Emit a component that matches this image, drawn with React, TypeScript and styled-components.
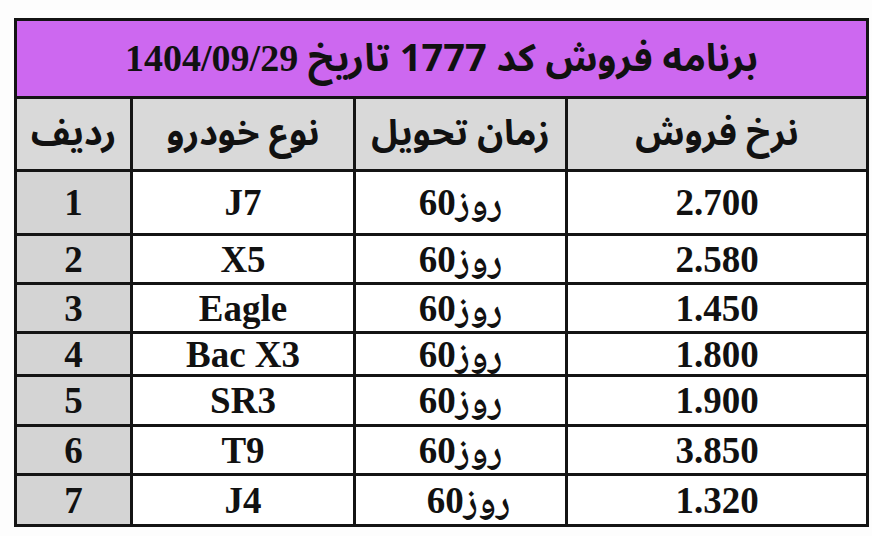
import styled, { createGlobalStyle } from "styled-components";

const GlobalStyle = createGlobalStyle`
    html, body {
        margin: 0;
        padding: 0;
        background: #fdfdfd;
    }
`;

const Page = styled.div`
    width: 872px;
    height: 536px;
    padding: 18px 0 0 14px;
    box-sizing: border-box;
`;

const Table = styled.table`
    width: 852px;
    border-collapse: collapse;
    table-layout: fixed;
    border: 3px solid #141414;
    direction: ltr;
`;

const TitleCell = styled.td`
    height: 75px;
    background: #cd68f0;
    border: 3px solid #141414;
    text-align: center;
    font-family: "Noto Sans Arabic", "DejaVu Sans", sans-serif;
    font-weight: bold;
    font-size: 38px;
    line-height: 1;
    color: #111;
    padding: 0;
`;

const SerifNum = styled.span`
    font-family: "Liberation Serif", serif;
    font-size: 38px;
`;

const HeadCell = styled.th`
    height: 70px;
    background: #d9d9d9;
    border: 3px solid #141414;
    text-align: center;
    font-family: "Noto Sans Arabic", "DejaVu Sans", sans-serif;
    font-weight: bold;
    font-size: 36px;
    line-height: 1;
    color: #111;
    padding: 0;
`;

const Row = styled.tr<{ $h: number }>`
    height: ${(p) => p.$h}px;
`;

const Cell = styled.td<{ $shade?: boolean; $shift?: number }>`
    background: ${(p) => (p.$shade ? "#d4d4d4" : "#ffffff")};
    border: 3px solid #141414;
    text-align: center;
    font-family: "Liberation Serif", "Noto Naskh Arabic", "Noto Sans Arabic", "DejaVu Sans", serif;
    font-weight: bold;
    font-size: 37px;
    line-height: 1;
    color: #111;
    padding: 0 0 0 ${(p) => p.$shift ?? 0}px;
`;

const rows = [
    { n: "1", car: "J7", price: "2.700", h: 64 },
    { n: "2", car: "X5", price: "2.580", h: 49 },
    { n: "3", car: "Eagle", price: "1.450", h: 49 },
    { n: "4", car: "Bac X3", price: "1.800", h: 43 },
    { n: "5", car: "SR3", price: "1.900", h: 50 },
    { n: "6", car: "T9", price: "3.850", h: 49 },
    { n: "7", car: "J4", price: "1.320", h: 51, shift: 16 },
];

export default function App() {
    return (
        <Page>
            <GlobalStyle />
            <Table>
                <colgroup>
                    <col style={{ width: 116 }} />
                    <col style={{ width: 223 }} />
                    <col style={{ width: 212 }} />
                    <col style={{ width: 301 }} />
                </colgroup>
                <tbody>
                    <tr>
                        <TitleCell colSpan={4} dir="rtl">
                            برنامه فروش کد 1777 تاریخ <SerifNum>1404/09/29</SerifNum>
                        </TitleCell>
                    </tr>
                    <tr>
                        <HeadCell dir="rtl">ردیف</HeadCell>
                        <HeadCell dir="rtl">نوع خودرو</HeadCell>
                        <HeadCell dir="rtl">زمان تحویل</HeadCell>
                        <HeadCell dir="rtl">نرخ فروش</HeadCell>
                    </tr>
                    {rows.map((r) => (
                        <Row key={r.n} $h={r.h}>
                            <Cell $shade>{r.n}</Cell>
                            <Cell>{r.car}</Cell>
                            <Cell dir="rtl" $shift={r.shift}>روز60</Cell>
                            <Cell>{r.price}</Cell>
                        </Row>
                    ))}
                </tbody>
            </Table>
        </Page>
    );
}
